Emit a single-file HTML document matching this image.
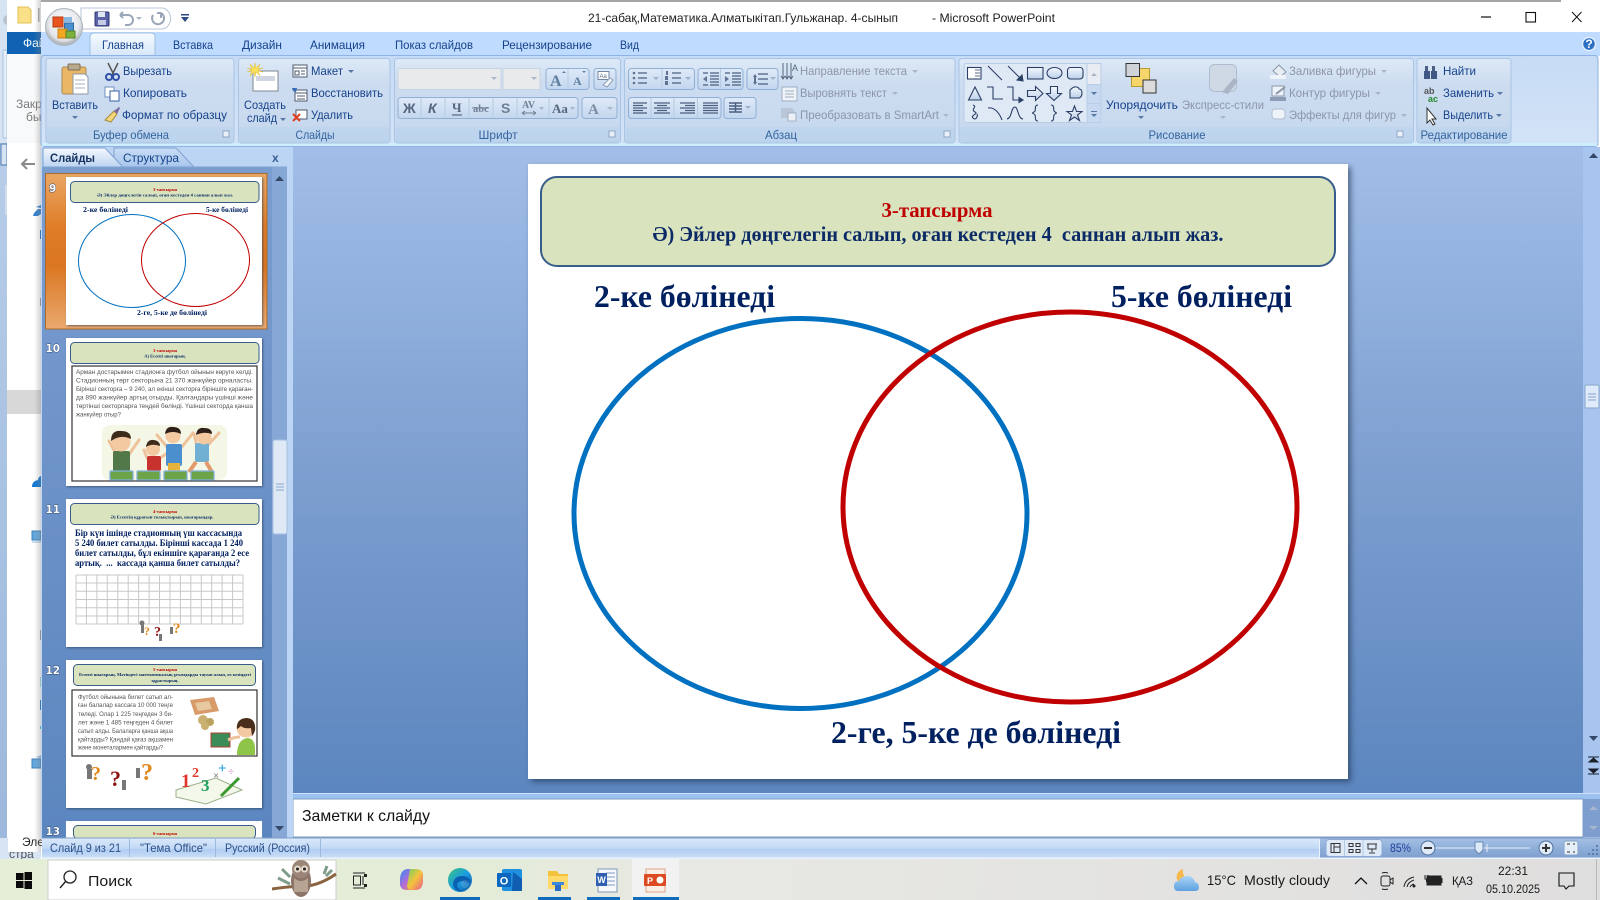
<!DOCTYPE html>
<html lang="ru">
<head>
<meta charset="utf-8">
<title>21-сабақ - Microsoft PowerPoint</title>
<style>
html,body{margin:0;padding:0;background:#fff;width:1600px;height:900px;overflow:hidden}
svg{display:block;position:absolute;left:0;top:0}
text{font-family:"Liberation Sans","Noto Sans CJK SC",sans-serif;font-size:12px;white-space:pre}
.t{fill:#15428b}
.d{fill:#8c96a8}
.g{fill:#33639f;text-anchor:middle}
.tab{fill:#15428b}
.s{font-family:"Liberation Serif","DejaVu Serif",serif;font-weight:bold}
.n{font-family:"DejaVu Sans",sans-serif;font-size:10.500px;font-weight:bold;fill:#fff;stroke:#2d4a75;stroke-width:.9;paint-order:stroke}
.m{text-anchor:middle}
.st{fill:#2a4f86}
.tb{fill:#1a1a1a}
.sh{fill:none;stroke:#2b3f66;stroke-width:1.100}
.ic{fill:none;stroke:#4a5f80;stroke-width:1.200}
</style>
</head>
<body>
<svg width="1600" height="900" viewBox="0 0 1600 900" xmlns="http://www.w3.org/2000/svg">
<defs>
<linearGradient id="main" x1="0" y1="0" x2="0" y2="1"><stop offset="0" stop-color="#a2bee8"/><stop offset=".5" stop-color="#7d9fd0"/><stop offset="1" stop-color="#5c86bf"/></linearGradient>
<linearGradient id="pane" x1="0" y1="0" x2="0" y2="1"><stop offset="0" stop-color="#7a9dd0"/><stop offset="1" stop-color="#5c86bf"/></linearGradient>
<linearGradient id="rib" x1="0" y1="0" x2="0" y2="1"><stop offset="0" stop-color="#c6dbf5"/><stop offset="1" stop-color="#d3e3f7"/></linearGradient>
<linearGradient id="grp" x1="0" y1="0" x2="0" y2="1"><stop offset="0" stop-color="#dde9f7"/><stop offset=".3" stop-color="#cddcf0"/><stop offset="1" stop-color="#c6d8ee"/></linearGradient>
<linearGradient id="lab" x1="0" y1="0" x2="0" y2="1"><stop offset="0" stop-color="#c0d6ee"/><stop offset="1" stop-color="#bcd3ed"/></linearGradient>
<linearGradient id="btn" x1="0" y1="0" x2="0" y2="1"><stop offset="0" stop-color="#dfeaf8"/><stop offset="1" stop-color="#c3d6ee"/></linearGradient>
<linearGradient id="atab" x1="0" y1="0" x2="0" y2="1"><stop offset="0" stop-color="#f6fbff"/><stop offset="1" stop-color="#d7e6f9"/></linearGradient>
<linearGradient id="sbar" x1="0" y1="0" x2="0" y2="1"><stop offset="0" stop-color="#dbe9fa"/><stop offset=".5" stop-color="#c2d9f6"/><stop offset=".55" stop-color="#afcdf2"/><stop offset="1" stop-color="#cfe1f8"/></linearGradient>
<linearGradient id="sbar2" x1="0" y1="0" x2="0" y2="1"><stop offset="0" stop-color="#a4c0e4"/><stop offset=".5" stop-color="#8fafda"/><stop offset="1" stop-color="#7f9fce"/></linearGradient>
<linearGradient id="task" x1="0" y1="0" x2="1" y2="0"><stop offset="0" stop-color="#e5efd8"/><stop offset=".3" stop-color="#e4ecd8"/><stop offset=".42" stop-color="#e8e8e4"/><stop offset="1" stop-color="#dfdede"/></linearGradient>
<linearGradient id="sel" x1="0" y1="0" x2="0" y2="1"><stop offset="0" stop-color="#eba765"/><stop offset=".35" stop-color="#df7c27"/><stop offset=".6" stop-color="#db7723"/><stop offset="1" stop-color="#eaa970"/></linearGradient>
<linearGradient id="ptab" x1="0" y1="0" x2="0" y2="1"><stop offset="0" stop-color="#f4f8fe"/><stop offset="1" stop-color="#bcd3f1"/></linearGradient>
<linearGradient id="ptab2" x1="0" y1="0" x2="0" y2="1"><stop offset="0" stop-color="#c8dcf6"/><stop offset="1" stop-color="#a8c6ec"/></linearGradient>
<linearGradient id="strip" x1="0" y1="0" x2="0" y2="1"><stop offset="0" stop-color="#b7cde8"/><stop offset="1" stop-color="#9db8dc"/></linearGradient>
<linearGradient id="wsh" x1="0" y1="0" x2="1" y2="0"><stop offset="0" stop-color="#999" stop-opacity="0"/><stop offset="1" stop-color="#777" stop-opacity=".35"/></linearGradient>
<linearGradient id="shp" x1="0" y1="0" x2="0" y2="1"><stop offset="0" stop-color="#f4f8fd"/><stop offset="1" stop-color="#bcd0ea"/></linearGradient>
<radialGradient id="orb" cx=".5" cy=".35" r=".7"><stop offset="0" stop-color="#ffffff"/><stop offset=".6" stop-color="#e3e5e8"/><stop offset="1" stop-color="#9da3aa"/></radialGradient>
<linearGradient id="edge" x1="0" y1="0" x2="1" y2="1"><stop offset="0" stop-color="#38c47a"/><stop offset=".5" stop-color="#1b9de2"/><stop offset="1" stop-color="#0c59a4"/></linearGradient>
<linearGradient id="cop" x1="0" y1="0" x2="1" y2="1"><stop offset="0" stop-color="#2a8ff0"/><stop offset=".5" stop-color="#b66ad8"/><stop offset="1" stop-color="#f2a13a"/></linearGradient>
<linearGradient id="cop2" x1="0" y1="0" x2="1" y2="1"><stop offset="0" stop-color="#6fd06a"/><stop offset=".5" stop-color="#f5c33c"/><stop offset="1" stop-color="#e85a8a"/></linearGradient>
<linearGradient id="cld" x1="0" y1="0" x2="0" y2="1"><stop offset="0" stop-color="#a9d4f7"/><stop offset="1" stop-color="#5fa0e0"/></linearGradient>
<filter id="ds" x="-5%" y="-5%" width="112%" height="112%"><feDropShadow dx="3" dy="3" stdDeviation="3" flood-color="#1e3350" flood-opacity=".6"/></filter>
<filter id="ds2" x="-5%" y="-5%" width="112%" height="112%"><feDropShadow dx="1" dy="1" stdDeviation="1" flood-color="#1e3350" flood-opacity=".6"/></filter>
</defs>

<!-- background window behind -->
<rect width="1600" height="900" fill="#fff"/>
<rect x="0" y="0" width="7" height="143" fill="#d6e3f2"/>
<rect x="3" y="50" width="4" height="88" rx="1" fill="#e6eef7" stroke="#a9c2e0"/>
<circle cx="8" cy="20" r="5" fill="#b9c3cf"/>
<rect x="7" y="0" width="34" height="143" fill="#f8f9fa"/>
<rect x="7" y="0" width="34" height="32" fill="#fff"/>
<path d="M18 7h10l3 3v13H18z" fill="#fbe08a" stroke="#e0c050"/>
<rect x="38" y="8" width="1.500" height="14" fill="#aaa"/>
<rect x="7" y="32" width="34" height="22" fill="#0f63b2"/>
<text x="23" y="47" fill="#fff" font-size="12">Фай</text>
<text x="16" y="108" fill="#7a7a7a" font-size="12">Закр</text>
<text x="26" y="121" fill="#7a7a7a" font-size="12">бы</text>
<rect x="0" y="143" width="7" height="695" fill="url(#strip)"/>
<rect x="5" y="185" width="2" height="30" fill="#d0dcec"/>
<rect x="1" y="144" width="6" height="21" fill="#d5e3f3" stroke="#4a78b0"/>
<rect x="7" y="143" width="34" height="695" fill="#fff"/>
<path d="M35 164H22m5-5-5 5 5 5" fill="none" stroke="#8a8a8a" stroke-width="2"/>
<path d="M34 213l4-4h3v5l-3 2h-5zM36 207l5-2v3z" fill="#2f7fd0"/>
<rect x="40" y="230" width="1" height="9" fill="#1f78c8"/>
<rect x="40" y="298" width="1" height="8" fill="#999"/>
<rect x="7" y="390" width="34" height="24" fill="#d8d8d8"/>
<path d="M32 487q0-6 6-7 0-3 3-4v11z" fill="#0f78d4"/>
<rect x="32" y="531" width="9" height="9" fill="#62a8de" stroke="#3f7fb8"/><path d="M32 542h9" stroke="#8fbadf"/>
<rect x="40" y="630" width="1" height="10" fill="#999"/>
<rect x="40" y="677" width="1" height="10" fill="#a8dcdc"/>
<rect x="40" y="700" width="1" height="10" fill="#1f78c8"/>
<rect x="40" y="726" width="1" height="3" fill="#44b8d8"/>
<rect x="32" y="759" width="9" height="9" fill="#62a8de" stroke="#3f7fb8"/><path d="M36 757l5-2v4z" fill="#9fc6e8"/>
<rect x="0" y="838" width="41" height="21" fill="#d6e4f4"/>
<text x="9" y="858" fill="#555" font-size="12">стра</text>
<rect x="8" y="838" width="33" height="14" fill="#fff"/>
<text x="22" y="846" fill="#222" font-size="12">Эле</text>
<rect x="34" y="0" width="7" height="852" fill="url(#wsh)"/>

<!-- title bar -->
<rect x="41" y="2" width="1559" height="30" fill="#fff"/>
<rect x="41" y="0" width="1520" height="2" fill="#a6a6a6"/>
<text x="588" y="22" fill="#222" textLength="310" lengthAdjust="spacingAndGlyphs">21-сабақ,Математика.Алматыкітап.Гульжанар. 4-сынып</text>
<text x="932" y="22" fill="#222" textLength="123" lengthAdjust="spacingAndGlyphs">- Microsoft PowerPoint</text>
<path d="M1481 17h10" stroke="#111" stroke-width="1.200"/>
<rect x="1526" y="12.500" width="9.500" height="9.500" fill="none" stroke="#111" stroke-width="1.100"/>
<path d="M1572 12l9.500 10m0-10-9.500 10" stroke="#111" stroke-width="1"/>

<!-- QAT -->
<path d="M81 8h82a11 11 0 0 1 0 21H81z" fill="#fff" stroke="#b7c6d8"/>
<rect x="95" y="12" width="14" height="14" rx="1" fill="#5a63a8" stroke="#2f3672"/>
<rect x="98" y="12" width="7" height="5" fill="#dfe6f4"/><rect x="98" y="20" width="8" height="5" fill="#c5cbe6"/>
<path d="M120 15h8a5 5 0 0 1 0 10h-3M120 15l3-3M120 15l3 3" fill="none" stroke="#9aa7b8" stroke-width="2"/>
<path d="M136 17l3 3 3-3z" fill="#aab6c6"/>
<path d="M161 13a6 6 0 1 1-8 2m8-2v5m0-5h-4" fill="none" stroke="#9aa7b8" stroke-width="2"/>
<path d="M181 17h8l-4 5z M181 14h8v1.500h-8z" fill="#2b4a80"/>

<!-- tabs -->
<rect x="41" y="32" width="1559" height="24" fill="#bfdbff"/>
<path d="M90 56V37q0-4 4-4h57q4 0 4 4v19z" fill="url(#atab)" stroke="#9ebfdf"/>
<text class="tab" x="102" y="49" textLength="42" lengthAdjust="spacingAndGlyphs">Главная</text>
<text class="tab" x="173" y="49" textLength="40" lengthAdjust="spacingAndGlyphs">Вставка</text>
<text class="tab" x="242" y="49" textLength="40" lengthAdjust="spacingAndGlyphs">Дизайн</text>
<text class="tab" x="310" y="49" textLength="55" lengthAdjust="spacingAndGlyphs">Анимация</text>
<text class="tab" x="395" y="49" textLength="78" lengthAdjust="spacingAndGlyphs">Показ слайдов</text>
<text class="tab" x="502" y="49" textLength="90" lengthAdjust="spacingAndGlyphs">Рецензирование</text>
<text class="tab" x="620" y="49" textLength="19" lengthAdjust="spacingAndGlyphs">Вид</text>

<!-- ribbon -->
<rect x="41" y="55.500" width="1557" height="91" rx="3" fill="url(#rib)" stroke="#8db2e3"/>
<rect x="42" y="143" width="1555" height="3" fill="#cfeefd"/>
<circle cx="1589" cy="44" r="6.500" fill="#2d6fc4" stroke="#e3effb" stroke-width="1.500"/>
<text x="1589" y="48" fill="#fff" font-size="11" font-weight="bold" class="m">?</text>

<!-- groups -->
<g stroke="#a9c4e4">
<rect x="46" y="58.500" width="188" height="84.500" rx="3" fill="url(#grp)"/>
<rect x="238.500" y="58.500" width="151.500" height="84.500" rx="3" fill="url(#grp)"/>
<rect x="394.500" y="58.500" width="226" height="84.500" rx="3" fill="url(#grp)"/>
<rect x="624.500" y="58.500" width="330.500" height="84.500" rx="3" fill="url(#grp)"/>
<rect x="959" y="58.500" width="454.500" height="84.500" rx="3" fill="url(#grp)"/>
<rect x="1417" y="58.500" width="94" height="84.500" rx="3" fill="url(#grp)"/>
</g>
<g fill="url(#lab)">
<rect x="47" y="126.500" width="186" height="16"/><rect x="239.500" y="126.500" width="150" height="16"/><rect x="395.500" y="126.500" width="224.500" height="16"/><rect x="625.500" y="126.500" width="329" height="16"/><rect x="960" y="126.500" width="453" height="16"/><rect x="1418" y="126.500" width="92.500" height="16"/>
</g>
<text class="g" x="131" y="139" textLength="76" lengthAdjust="spacingAndGlyphs">Буфер обмена</text>
<text class="g" x="315" y="139" textLength="39" lengthAdjust="spacingAndGlyphs">Слайды</text>
<text class="g" x="498" y="139" textLength="39" lengthAdjust="spacingAndGlyphs">Шрифт</text>
<text class="g" x="781" y="139" textLength="32" lengthAdjust="spacingAndGlyphs">Абзац</text>
<text class="g" x="1177" y="139" textLength="57" lengthAdjust="spacingAndGlyphs">Рисование</text>
<text class="g" x="1464" y="139" textLength="87" lengthAdjust="spacingAndGlyphs">Редактирование</text>
<g fill="#eaf0f8" stroke="#8fa6c4"><rect x="223" y="131" width="6" height="6"/><rect x="609" y="131" width="6" height="6"/><rect x="944" y="131" width="6" height="6"/><rect x="1397" y="131" width="6" height="6"/></g>

<!-- clipboard -->
<rect x="62" y="67" width="24" height="27" rx="2" fill="#e9b765" stroke="#a98a55"/>
<rect x="68" y="64" width="12" height="6" rx="1" fill="#b8a98a" stroke="#7e7058"/>
<path d="M73 74h12l3 3v17H73z" fill="#fff" stroke="#8e9aa8"/>
<path d="M75 80h10M75 84h10M75 88h10" stroke="#aab2be"/>
<text class="t" x="52" y="109" textLength="46" lengthAdjust="spacingAndGlyphs">Вставить</text>
<path d="M72 116h6l-3 3z" fill="#5878a4"/>
<path d="M108 63l6 12M118 63l-6 12" stroke="#555" stroke-width="1.500"/><circle cx="109" cy="77" r="3" fill="none" stroke="#2e50a8" stroke-width="2"/><circle cx="116" cy="77" r="3" fill="none" stroke="#2e50a8" stroke-width="2"/>
<text class="t" x="123" y="75" textLength="49" lengthAdjust="spacingAndGlyphs">Вырезать</text>
<rect x="105" y="87" width="9" height="10" fill="#fff" stroke="#6f8fc0"/><rect x="110" y="91" width="9" height="10" fill="#fff" stroke="#3a5fa8"/>
<text class="t" x="123" y="97" textLength="64" lengthAdjust="spacingAndGlyphs">Копировать</text>
<path d="M105 120l9-9 3 3-6 8z" fill="#f3d67a" stroke="#a78c3c"/><path d="M114 111l5-4 1 1-3 6z" fill="#7a6a9e"/>
<text class="t" x="122" y="119" textLength="105" lengthAdjust="spacingAndGlyphs">Формат по образцу</text>

<!-- slides group -->
<rect x="253" y="71" width="25" height="20" fill="#fff" stroke="#7f8792"/><rect x="256" y="76" width="19" height="5" fill="#cfd6e2"/>
<path d="M255 63l1 5 4-4-2 5 5-1-5 2 5 2-5-1 2 5-4-4-1 5-1-5-4 4 2-5-5 1 5-2-5-2 5 1-2-5 4 4z" fill="#f7e15a" stroke="#e5b93b" stroke-width=".5"/>
<text class="t" x="244" y="109" textLength="42" lengthAdjust="spacingAndGlyphs">Создать</text>
<text class="t" x="247" y="122" textLength="30" lengthAdjust="spacingAndGlyphs">слайд</text>
<path d="M280 118h6l-3 3z" fill="#5878a4"/>
<rect x="293" y="65" width="14" height="12" fill="#fff" stroke="#4e5b6d"/><path d="M293 68h14M295 71h4v4h-4zM301 71h4M301 74h4" stroke="#4e5b6d" fill="none"/>
<text class="t" x="311" y="75" textLength="32" lengthAdjust="spacingAndGlyphs">Макет</text>
<path d="M348 70h6l-3 3z" fill="#5878a4"/>
<rect x="295" y="90" width="12" height="11" fill="#fff" stroke="#4e5b6d"/><path d="M295 93h12M297 96h8M297 99h8" stroke="#4e5b6d"/><path d="M292 88h5l-1 4-3-1z" fill="#3a6cb8"/>
<text class="t" x="311" y="97" textLength="72" lengthAdjust="spacingAndGlyphs">Восстановить</text>
<rect x="296" y="110" width="11" height="9" fill="#fff" stroke="#4e5b6d"/><path d="M293 114l7 7m0-7-7 7" stroke="#e04020" stroke-width="2"/>
<text class="t" x="311" y="119" textLength="42" lengthAdjust="spacingAndGlyphs">Удалить</text>

<!-- font group -->
<rect x="398" y="68.500" width="103" height="21" fill="#e8eaec" stroke="#c6d4e5"/><path d="M491 77h6l-3 3z" fill="#aab6c6"/>
<rect x="503" y="68.500" width="37" height="21" fill="#e8eaec" stroke="#c6d4e5"/><path d="M531 77h6l-3 3z" fill="#aab6c6"/>
<rect x="546" y="68.500" width="43" height="21" rx="3" fill="url(#btn)" stroke="#8fb0d7"/><path d="M568 69v20" stroke="#b4cbe4"/>
<text x="550" y="86" class="s" fill="#5f7f9f" style="font-size:16px">A</text><path d="M562 73l2-2 2 2z" fill="#5f7f9f"/>
<text x="573" y="85" class="s" fill="#5f7f9f" style="font-size:12px">A</text><path d="M582 71h4l-2 2z" fill="#5f7f9f"/>
<rect x="594" y="68.500" width="22" height="21" rx="3" fill="url(#btn)" stroke="#8fb0d7"/><rect x="598" y="71.500" width="11" height="8" fill="#fff" stroke="#6f87a6"/><text x="599.500" y="78" fill="#5a7090" style="font-size:6px">Aa</text><path d="M603 85l7-7 3 2-6 7z" fill="#f3f6fa" stroke="#8fa0b8"/>
<rect x="398" y="97.500" width="180" height="21" rx="3" fill="url(#btn)" stroke="#8fb0d7"/>
<path d="M421 98v20M445 98v20M469 98v20M493 98v20M517 98v20M549 98v20" stroke="#b4cbe4"/>
<text x="403" y="113" fill="#55667e" style="font-size:14px;font-weight:bold">Ж</text>
<text x="428" y="113" fill="#55667e" style="font-size:14px;font-weight:bold;font-style:italic">К</text>
<text x="452" y="112" class="s" fill="#55667e" style="font-size:13px">Ч</text><path d="M452 115h10" stroke="#55667e" stroke-width="1.200"/>
<text x="473" y="112" class="s" fill="#6f7f94" style="font-size:10.500px">abc</text><path d="M472 108h17" stroke="#6f7f94"/>
<text x="501" y="113" fill="#6f7f94" style="font-size:14px;font-weight:bold">S</text>
<text x="522" y="108" class="s" fill="#6f7f94" style="font-size:10px">AV</text><path d="M522 113h14M522 113l3-2M522 113l3 2M536 113l-3-2M536 113l-3 2" stroke="#6f7f94" fill="none"/><path d="M539 107h5l-2.500 3z" fill="#aab6c6"/>
<text x="552" y="113" class="s" fill="#55667e" style="font-size:13px">Aa</text><path d="M570 107h5l-2.500 3z" fill="#aab6c6"/>
<rect x="582" y="97.500" width="35" height="21" rx="3" fill="url(#btn)" stroke="#8fb0d7"/><text x="588" y="114" class="s" fill="#7c8da3" style="font-size:15px">A</text><path d="M607 107h6l-3 3z" fill="#aab6c6"/>

<!-- paragraph -->
<g fill="url(#btn)" stroke="#8fb0d7">
<rect x="628.500" y="68.500" width="66" height="21" rx="3"/><rect x="698" y="68.500" width="45" height="21" rx="3"/><rect x="747" y="68.500" width="31" height="21" rx="3"/>
<rect x="628.500" y="97.500" width="92.500" height="21" rx="3"/><rect x="724" y="97.500" width="32" height="21" rx="3"/>
</g>
<path d="M662 69v20M720.500 69v20M651 98v20M674 98v20M697.500 98v20" stroke="#b4cbe4"/>
<g class="ic">
<path d="M638 73h9M638 78h9M638 83h9M672 73h9M672 78h9M672 83h9"/>
<path d="M710 73h9M710 76h9M710 79h9M710 82h9M710 85h9M703 73h5M703 85h5"/>
<path d="M732 73h9M732 76h9M732 79h9M732 82h9M732 85h9M725 73h5M725 85h5"/>
<path d="M758 74h10M758 79h10M758 84h10"/>
<path d="M633 103h14M633 105.500h10M633 108h14M633 110.500h10M633 113h14M654 103h16M657 105.500h10M654 108h16M657 110.500h10M654 113h16M680 103h15M685 105.500h10M680 108h15M685 110.500h10M680 113h15M703 103h15M703 105.500h15M703 108h15M703 110.500h15M703 113h15"/>
<path d="M729 103h13M729 106h13M729 109h13M729 112h13M735.500 103v9" stroke-width="1.500"/>
</g>
<g fill="#5f7290"><circle cx="634" cy="73" r="1.300"/><circle cx="634" cy="78" r="1.300"/><circle cx="634" cy="83" r="1.300"/>
<path d="M666 71h2v4h-2zM665 76h3v4h-3zM665 81h3v4h-3z"/><path d="M703 79l4-3v6zM729 79l-4-3v6zM755 74l2 3h-4zM755 85l2-3h-4zM754 77h2v5h-2z"/></g>
<g fill="#9fb1c8"><path d="M653 77h6l-3 3zM685 77h6l-3 3zM770 77h6l-3 3zM745 106h6l-3 3z"/></g>
<path d="M783 63v15M787 63v15M791 63v15M781 76l2 3 2-3M785 76l2 3 2-3M789 76l2 3 2-3" stroke="#55667e" fill="none"/><text x="792" y="71" fill="#55667e" style="font-size:9px">A</text>
<text class="d" x="800" y="75" textLength="107" lengthAdjust="spacingAndGlyphs">Направление текста</text><path d="M912 70h6l-3 3z" fill="#aab6c6"/>
<rect x="782" y="87" width="15" height="14" fill="#f0f3f7" stroke="#9eafc5"/><path d="M785 91h9M785 94h9M785 97h9" stroke="#9eafc5"/>
<text class="d" x="800" y="97" textLength="87" lengthAdjust="spacingAndGlyphs">Выровнять текст</text><path d="M892 92h6l-3 3z" fill="#aab6c6"/>
<path d="M781 108h11l4 5-4 5h-11z" fill="#b8c6d8"/><rect x="788" y="113" width="8" height="8" fill="#edf1f6" stroke="#a0b0c4"/>
<text class="d" x="800" y="119" textLength="139" lengthAdjust="spacingAndGlyphs">Преобразовать в SmartArt</text><path d="M943 114h6l-3 3z" fill="#aab6c6"/>

<!-- drawing gallery -->
<rect x="964" y="63.500" width="137" height="59" rx="2" fill="#dfe9f6" stroke="#b8cde6"/>
<rect x="1087" y="63.500" width="14" height="21" fill="#e9edf3" stroke="#b8cde6"/><rect x="1087" y="84.500" width="14" height="19" fill="#c6d9f1" stroke="#b8cde6"/><rect x="1087" y="103.500" width="14" height="19" fill="#c6d9f1" stroke="#b8cde6"/>
<path d="M1091 76h6l-3-3z" fill="#a7b4c4"/><path d="M1091 92h6l-3 3zM1091 111h6v1h-6zM1091 114h6l-3 3z" fill="#5878a4"/>
<g class="sh">
<rect x="967.500" y="67.500" width="13.500" height="11.500" fill="#fff"/><path d="M975 70h5M975 73h5M975 76h5" stroke-width=".7"/>
<path d="M988 66l14 14M1008 66l14 14"/><path d="M1023 81l-6-1 5-5z" fill="#2b3f66"/>
<rect x="1027.500" y="67.500" width="15.500" height="11.500" fill="url(#shp)"/><ellipse cx="1054.500" cy="73" rx="7.500" ry="5.500" fill="url(#shp)"/><rect x="1067.500" y="67.500" width="15.500" height="11.500" rx="3" fill="url(#shp)"/>
<path d="M975 87l6.500 13h-13z" fill="url(#shp)"/><path d="M987 87h6v12h10M1007 87h6v13h8"/><path d="M1023 100l-4-2.500v5z" fill="#2b3f66"/>
<path d="M1027.500 90.500h8v-4l7.500 7-7.500 7v-4h-8z" fill="url(#shp)"/><path d="M1050.500 86.500h7v7h4l-7.500 7-7.500-7h4z" fill="url(#shp)"/><path d="M1070 90q4-4 6-3 3 0 3 2 3 0 3 4t-3 5h-9z" fill="url(#shp)"/>
<path d="M973 105c5 2-3 4 2 7 4 2-5 3-2 6 3 3 5-2 4-4"/><path d="M988 108c6-1 11 4 14 12M1007 119c5-1 4-12 8-12 3 0 3 12 8 12"/>
<path d="M1038 105c-4 0-2 5-3 6-1 1-2 2-3 2 1 0 2 1 3 2 1 1-1 6 3 6M1051 105c4 0 2 5 3 6 1 1 2 2 3 2-1 0-2 1-3 2-1 1 1 6-3 6"/>
<path d="M1074.500 106l2 5.500h5.500l-4.500 3.500 2 5.500-5-3.500-5 3.500 2-5.500-4.500-3.500h5.500z" fill="url(#shp)"/>
</g>
<rect x="1131.500" y="68.500" width="18" height="18" fill="#f6d66b" stroke="#b99b36"/>
<rect x="1126" y="63.500" width="13.500" height="13" fill="#cfd3d8" stroke="#333"/><rect x="1143" y="80" width="13" height="13" fill="#dcdcdc" stroke="#333"/>
<text class="t" x="1106" y="109" textLength="72" lengthAdjust="spacingAndGlyphs">Упорядочить</text><path d="M1138 116h6l-3 3z" fill="#5878a4"/>
<rect x="1209.500" y="64.500" width="27" height="27" rx="5" fill="#cfd9e6" stroke="#aebdd0"/><path d="M1222 92l12-14 4 3-10 13z" fill="#aab6c6"/>
<text class="d" x="1182" y="109" textLength="82" lengthAdjust="spacingAndGlyphs">Экспресс-стили</text><path d="M1220 116h6l-3 3z" fill="#aab6c6"/>
<path d="M1273 71l6-6 7 7-6 5z" fill="#e8edf4" stroke="#8a97a8"/><rect x="1270" y="75" width="16" height="4" fill="#eef3f9"/>
<text class="d" x="1289" y="75" textLength="87" lengthAdjust="spacingAndGlyphs">Заливка фигуры</text><path d="M1381 70h6l-3 3z" fill="#aab6c6"/>
<path d="M1272 86h12v10h-12z" fill="#eef3f9" stroke="#8a97a8"/><path d="M1276 94l9-7" stroke="#8a97a8" stroke-width="2"/><rect x="1270" y="97" width="16" height="4" fill="#8e9db5"/>
<text class="d" x="1289" y="97" textLength="81" lengthAdjust="spacingAndGlyphs">Контур фигуры</text><path d="M1375 92h6l-3 3z" fill="#aab6c6"/>
<rect x="1272" y="109" width="13" height="10" rx="3" fill="#eef3f9" stroke="#aebdd0"/>
<text class="d" x="1289" y="119" textLength="107" lengthAdjust="spacingAndGlyphs">Эффекты для фигур</text><path d="M1401 114h6l-3 3z" fill="#aab6c6"/>

<!-- editing -->
<path d="M1425 66h3v5h-3zM1432 66h3v5h-3z" fill="#4c5f82"/><rect x="1424" y="71" width="6" height="8" fill="#3f5884"/><rect x="1431" y="71" width="6" height="8" fill="#3f5884"/>
<text class="t" x="1443" y="75" textLength="33" lengthAdjust="spacingAndGlyphs">Найти</text>
<text x="1424" y="94" fill="#555" style="font-size:9px;font-weight:bold">ab</text><text x="1428" y="102" fill="#238a2e" style="font-size:9px;font-weight:bold">ac</text>
<text class="t" x="1443" y="97" textLength="51" lengthAdjust="spacingAndGlyphs">Заменить</text><path d="M1497 92h6l-3 3z" fill="#5878a4"/>
<path d="M1427 108v15l3-3 3 5 2-1-3-5h4z" fill="#fff" stroke="#333"/>
<text class="t" x="1443" y="119" textLength="50" lengthAdjust="spacingAndGlyphs">Выделить</text><path d="M1496 114h6l-3 3z" fill="#5878a4"/>

<!-- main workspace -->
<rect x="41" y="147" width="1559" height="692" fill="#bfd7f6"/>
<rect x="293" y="147" width="1290" height="646" fill="url(#main)"/>
<!-- notes -->
<rect x="293" y="793" width="1307" height="6" fill="#9cc2f0"/><rect x="293" y="793" width="1307" height="1" fill="#cfe2fa"/>
<rect x="293" y="799" width="1290" height="38" fill="#fff" stroke="#7e9bc4"/>
<text x="302" y="821" fill="#111" textLength="128" lengthAdjust="spacingAndGlyphs" style="font-size:16px">Заметки к слайду</text>

<!-- main scrollbar -->
<rect x="1583" y="147" width="17" height="646" fill="#a7c5ee"/>
<rect x="1583" y="799" width="17" height="38" fill="#7f9ed0"/>
<path d="M1589 158l4.500-5 4.500 5z" fill="#34496a"/>
<rect x="1585" y="385" width="14" height="23" rx="1" fill="#dfeafa" stroke="#8aa7ce"/><path d="M1588 394h8M1588 397h8M1588 400h8" stroke="#8aa7ce"/>
<path d="M1589 736h9l-4.500 5z" fill="#34496a"/>
<path d="M1588 757h11M1589 762l4.500-4 4.500 4zM1589 769l4.500 4 4.500-4zM1588 774h11" fill="#1a1f29" stroke="#1a1f29"/>
<path d="M1589 810l4.500-4 4.500 4z M1589 826h9l-4.500 4z" fill="#a6b6cd"/>

<!-- slide -->
<g>
<rect x="528" y="164" width="820" height="615" fill="#fff" filter="url(#ds)"/>
<rect x="541" y="177" width="794" height="89" rx="16" fill="#d9e4bf" stroke="#385d8a" stroke-width="2"/>
<text class="s m" x="937" y="217" fill="#c00000" style="font-size:21px" textLength="111" lengthAdjust="spacingAndGlyphs">3-тапсырма</text>
<text class="s m" x="938" y="241" fill="#0b2a66" style="font-size:21px" textLength="571" lengthAdjust="spacingAndGlyphs">Ә) Эйлер дөңгелегін салып, оған кестеден 4  саннан алып жаз.</text>
<text class="s" x="594" y="307" fill="#002060" style="font-size:32px" textLength="181" lengthAdjust="spacingAndGlyphs">2-ке бөлінеді</text>
<text class="s" x="1111" y="307" fill="#002060" style="font-size:32px" textLength="181" lengthAdjust="spacingAndGlyphs">5-ке бөлінеді</text>
<text class="s" x="831" y="743" fill="#002060" style="font-size:32px" textLength="290" lengthAdjust="spacingAndGlyphs">2-ге, 5-ке де бөлінеді</text>
<ellipse cx="800.500" cy="513.500" rx="226.500" ry="195" fill="none" stroke="#0070c0" stroke-width="5"/>
<ellipse cx="1070" cy="507" rx="227" ry="195" fill="none" stroke="#c00000" stroke-width="5"/>
</g>

<!-- side pane -->
<rect x="42" y="167" width="230" height="671" fill="url(#pane)"/>
<rect x="41" y="147" width="252" height="20" fill="#bcd5f4"/>
<path d="M194 167l-17-18q-1-1-3-1h-60v19z" fill="url(#ptab2)" stroke="#7fa2d1"/>
<path d="M43 167v-17q0-2 2-2h60l18 19z" fill="url(#ptab)" stroke="#7fa2d1"/>
<text x="50" y="162" fill="#15325f" font-weight="bold" textLength="45" lengthAdjust="spacingAndGlyphs">Слайды</text>
<text x="123" y="162" fill="#15428b" textLength="56" lengthAdjust="spacingAndGlyphs">Структура</text>
<text x="272" y="162" fill="#3a5f95" font-weight="bold" style="font-size:12px">x</text>
<rect x="42" y="166.500" width="245" height="1" fill="#7fa2d1"/>
<!-- pane scrollbar -->
<rect x="272" y="167" width="15" height="671" fill="#87a8d6"/>
<rect x="287" y="147" width="6" height="691" fill="#bcd5f4"/>
<path d="M275 181l4.500-5 4.500 5z" fill="#34496a"/>
<rect x="273" y="440" width="14" height="94" rx="2" fill="#dfe9f6" stroke="#a9c1e0"/><path d="M276 484h8M276 487h8M276 490h8" stroke="#8aa7ce"/>
<path d="M275 826h9l-4.500 5z" fill="#34496a"/>

<!-- thumb 9 -->
<rect x="45.500" y="173.500" width="221.500" height="155.500" fill="url(#sel)" stroke="#a86b2e"/>
<text class="n" x="49" y="192">9</text>
<rect x="66" y="177" width="196" height="148" fill="#fff" filter="url(#ds2)"/>
<rect x="70.500" y="181.500" width="188.500" height="21" rx="4" fill="#d9e4bf" stroke="#385d8a"/>
<text class="s m" x="165" y="191" fill="#c00000" style="font-size:4.500px">3-тапсырма</text>
<text class="s m" x="165" y="196.500" fill="#0b2a66" style="font-size:4.500px" textLength="136" lengthAdjust="spacingAndGlyphs">Ә) Эйлер дөңгелегін салып, оған кестеден 4 саннан алып жаз.</text>
<text class="s" x="83" y="212" fill="#002060" style="font-size:7.500px" textLength="45" lengthAdjust="spacingAndGlyphs">2-ке бөлінеді</text>
<text class="s" x="206" y="212" fill="#002060" style="font-size:7.500px" textLength="42" lengthAdjust="spacingAndGlyphs">5-ке бөлінеді</text>
<text class="s" x="137" y="315" fill="#002060" style="font-size:7.500px" textLength="70" lengthAdjust="spacingAndGlyphs">2-ге, 5-ке де бөлінеді</text>
<ellipse cx="132" cy="261" rx="53.500" ry="46.500" fill="none" stroke="#0070c0"/>
<ellipse cx="195.500" cy="260" rx="54" ry="46.500" fill="none" stroke="#c00000"/>

<!-- thumb 10 -->
<text class="n" x="45.500" y="352">10</text>
<rect x="66" y="338" width="196" height="148" fill="#fff" filter="url(#ds2)"/>
<rect x="70.500" y="342.500" width="188.500" height="21" rx="4" fill="#d9e4bf" stroke="#385d8a"/>
<text class="s m" x="165" y="352" fill="#c00000" style="font-size:4.500px">3-тапсырма</text>
<text class="s m" x="165" y="357.500" fill="#0b2a66" style="font-size:4.500px">А) Есепті шығарың.</text>
<rect x="72" y="366" width="185" height="115" fill="#fff" stroke="#333" stroke-width="1.200"/>
<g>
<text x="76" y="374" fill="#555" style="font-size:6px" textLength="177" lengthAdjust="spacingAndGlyphs">Арман достарымен стадионға футбол ойынын көруге келді.</text>
<text x="76" y="382.500" fill="#555" style="font-size:6px" textLength="177" lengthAdjust="spacingAndGlyphs">Стадионның төрт секторына 21 370 жанкүйер орналасты.</text>
<text x="76" y="391" fill="#555" style="font-size:6px" textLength="177" lengthAdjust="spacingAndGlyphs">Бірінші секторға – 9 240, ал екінші секторға біріншіге қараған-</text>
<text x="76" y="399.500" fill="#555" style="font-size:6px" textLength="177" lengthAdjust="spacingAndGlyphs">да 890 жанкүйер артық отырды. Қалғандары үшінші және</text>
<text x="76" y="408" fill="#555" style="font-size:6px" textLength="177" lengthAdjust="spacingAndGlyphs">төртінші секторларға теңдей бөлінді. Үшінші секторда қанша</text>
<text x="76" y="416.500" fill="#555" style="font-size:6px">жанкүйер отыр?</text>
</g>
<rect x="102" y="425" width="125" height="55" rx="8" fill="#f4f6e6"/>
<g stroke="#eec29a" stroke-width="3" fill="none" stroke-linecap="round"><path d="M116 454l-7-13M128 456l11-16M147 458l-3-8M160 458l6-4M168 448l-11-13M181 448l12-15M197 446l-3-12M209 444l10-11"/></g>
<rect x="113" y="451" width="17" height="21" rx="2" fill="#52784a"/><circle cx="121" cy="442" r="9.500" fill="#f3c9a2"/><path d="M111 441q0-11 10-10 10 0 10 8-10-5-20 2z" fill="#3d2b1c"/>
<rect x="147" y="456" width="14" height="15" rx="2" fill="#c8322e"/><circle cx="153" cy="449" r="7" fill="#f3c9a2"/><path d="M146 447q1-8 8-7 6 1 6 6-8-3-14 1z" fill="#3d2b1c"/>
<rect x="166" y="444" width="16" height="22" rx="2" fill="#4c8fcf"/><rect x="168" y="463" width="12" height="9" fill="#e6b43c"/><circle cx="173" cy="436" r="7.500" fill="#f3c9a2"/><path d="M165 434q1-8 8-7 8 0 8 7-8-4-16 0z" fill="#2e2018"/>
<rect x="195" y="443" width="14" height="19" rx="2" fill="#71b0d2"/><path d="M196 462l-7 10M206 462l6 10" stroke="#e39a6b" stroke-width="4"/><circle cx="204" cy="437" r="7.500" fill="#f3c9a2"/><path d="M196 435q1-8 8-7 8 0 8 6-8-3-16 1z" fill="#2e2018"/>
<g fill="#6da447" stroke="#82b0df" stroke-width="1.200"><rect x="110" y="471" width="23" height="9" rx="1"/><rect x="137" y="471" width="23" height="9" rx="1"/><rect x="164" y="471" width="23" height="9" rx="1"/><rect x="191" y="471" width="23" height="9" rx="1"/></g>

<!-- thumb 11 -->
<text class="n" x="45.500" y="513">11</text>
<rect x="66" y="499" width="196" height="148" fill="#fff" filter="url(#ds2)"/>
<rect x="70.500" y="503.500" width="188.500" height="21" rx="4" fill="#d9e4bf" stroke="#385d8a"/>
<text class="s m" x="165" y="513" fill="#c00000" style="font-size:4.500px">4-тапсырма</text>
<text class="s m" x="162" y="518.500" fill="#0b2a66" style="font-size:4.500px" textLength="103" lengthAdjust="spacingAndGlyphs">Ә) Есептің құрағын толықтырып, шығарыңдар.</text>
<text class="s" x="75" y="536" style="font-size:9.500px" fill="#002060" textLength="167" lengthAdjust="spacingAndGlyphs">Бір күн ішінде стадионның үш кассасында</text>
<text class="s" x="75" y="546" style="font-size:9.500px" fill="#002060" textLength="168" lengthAdjust="spacingAndGlyphs">5 240 билет сатылды. Бірінші кассада 1 240</text>
<text class="s" x="75" y="556" style="font-size:9.500px" fill="#002060" textLength="174" lengthAdjust="spacingAndGlyphs">билет сатылды, бұл екіншіге қарағанда 2 есе</text>
<text class="s" x="75" y="566" style="font-size:9.500px" fill="#002060" textLength="165" lengthAdjust="spacingAndGlyphs">артық.  ...  кассада қанша билет сатылды?</text>
<path d="M76 575h167M76 583h167M76 591.300h167M76 599.500h167M76 607.700h167M76 616h167M76 624h167M76 575v49M86.400 575v49M96.900 575v49M107.300 575v49M117.800 575v49M128.200 575v49M138.600 575v49M149.100 575v49M159.500 575v49M170 575v49M180.400 575v49M190.800 575v49M201.300 575v49M211.700 575v49M222.100 575v49M232.600 575v49M243 575v49" stroke="#c8c8c8" fill="none"/>
<rect x="140" y="624.500" width="45" height="14" fill="#fff" opacity=".7"/>
<circle cx="142" cy="623" r="2.500" fill="#777"/><rect x="141" y="625" width="3" height="8" fill="#777"/>
<text class="s" x="144" y="635" fill="#e08a1e" style="font-size:12px">?</text>
<text class="s" x="154" y="636" fill="#8e1414" style="font-size:14px">?</text><rect x="159" y="634" width="3" height="7" fill="#777"/>
<rect x="170" y="627" width="3" height="7" fill="#777"/><text class="s" x="173" y="633" fill="#e08a1e" style="font-size:15px">?</text>

<!-- thumb 12 -->
<text class="n" x="45.500" y="674">12</text>
<rect x="66" y="660" width="196" height="148" fill="#fff" filter="url(#ds2)"/>
<rect x="73.500" y="664.500" width="182" height="21" rx="4" fill="#d9e4bf" stroke="#385d8a"/>
<text class="s m" x="165" y="671" fill="#c00000" style="font-size:4.500px">5-тапсырма</text>
<text class="s m" x="165" y="676" fill="#0b2a66" style="font-size:4.500px" textLength="172" lengthAdjust="spacingAndGlyphs">Есепті шығарың. Мәтіндегі математикалық ұғымдарды тауып алып, өз кезіңдегі</text>
<text class="s m" x="165" y="682" fill="#0b2a66" style="font-size:4.500px">құрастырың.</text>
<rect x="72" y="690" width="185" height="66" fill="#fff" stroke="#333" stroke-width="1.200"/>
<g>
<text x="78" y="699" fill="#555" style="font-size:6px" textLength="95" lengthAdjust="spacingAndGlyphs">Футбол ойынына билет сатып ал-</text>
<text x="78" y="707" fill="#555" style="font-size:6px" textLength="95" lengthAdjust="spacingAndGlyphs">ған балалар кассаға 10 000 теңге</text>
<text x="78" y="716" fill="#555" style="font-size:6px" textLength="95" lengthAdjust="spacingAndGlyphs">төледі. Олар 1 225 теңгеден 3 би-</text>
<text x="78" y="724.500" fill="#555" style="font-size:6px" textLength="95" lengthAdjust="spacingAndGlyphs">лет және 1 485 теңгеден 4 билет</text>
<text x="78" y="733" fill="#555" style="font-size:6px" textLength="95" lengthAdjust="spacingAndGlyphs">сатып алды. Балаларға қанша ақша</text>
<text x="78" y="741.500" fill="#555" style="font-size:6px" textLength="95" lengthAdjust="spacingAndGlyphs">қайтарды? Қандай қағаз ақшамен</text>
<text x="78" y="749.500" fill="#555" style="font-size:6px" textLength="85" lengthAdjust="spacingAndGlyphs">және монеталармен қайтарды?</text>
</g>
<path d="M190 700l24-3 5 14-24 4z" fill="#d99a6a"/><path d="M195 703l14-2 3 8-14 2z" fill="#e8c8a0"/>
<circle cx="203" cy="720" r="5" fill="#c9b070"/><circle cx="210" cy="722" r="4" fill="#bca25f"/><circle cx="205" cy="726" r="4" fill="#c9b070"/>
<rect x="211" y="733" width="19" height="14" fill="#3c8c58" stroke="#b04030"/>
<path d="M228 740q6-3 12-3" stroke="#eec29a" stroke-width="3" fill="none"/>
<circle cx="246" cy="728" r="9.500" fill="#f3c9a2"/><path d="M237 729q-1-10 9-11 10 0 9 12-1 4-3 6l-1-8q-7 1-10-2-2 2-4 3z" fill="#4a2f1c"/>
<path d="M237 755q0-15 10-17 7 0 8 9l0 8z" fill="#8ec448"/>
<circle cx="89" cy="767" r="3" fill="#777"/><rect x="87" y="769" width="5" height="10" fill="#777"/>
<text class="s" x="91" y="780" fill="#e08a1e" style="font-size:20px">?</text>
<text class="s" x="110" y="786" fill="#8e1414" style="font-size:22px">?</text><rect x="122" y="780" width="4" height="10" fill="#777"/>
<rect x="136" y="768" width="4" height="10" fill="#777"/><text class="s" x="141" y="780" fill="#e08a1e" style="font-size:24px">?</text>
<path d="M176 790l40-12 26 12-36 14-30-7z" fill="#f4f8ea" stroke="#9ab08a"/>
<text class="s" x="181" y="787" fill="#e0352a" style="font-size:19px">1</text>
<text class="s" x="192" y="777" fill="#e0352a" style="font-size:14px">2</text>
<text class="s" x="201" y="791" fill="#1ea05c" style="font-size:17px">3</text>
<text class="s" x="213" y="779" fill="#7f7f7f" style="font-size:11px">×</text>
<text class="s" x="218" y="773" fill="#1e9ae0" style="font-size:15px">+</text>
<text class="s" x="228" y="775" fill="#d9a0d0" style="font-size:11px">÷</text>
<path d="M221 796l18-18" stroke="#3a9a30" stroke-width="3"/>

<!-- thumb 13 -->
<text class="n" x="45.500" y="835">13</text>
<rect x="66" y="821" width="196" height="17" fill="#fff"/>
<rect x="73.500" y="825.500" width="182" height="13" rx="4" fill="#d9e4bf" stroke="#385d8a"/>
<text class="s m" x="165" y="835" fill="#c00000" style="font-size:4.500px">6-тапсырма</text>

<!-- status bar -->
<rect x="42" y="838" width="1558" height="21" fill="url(#sbar)"/>
<rect x="42" y="837.500" width="1558" height="1" fill="#7d9cc6"/>
<rect x="42" y="857.500" width="1558" height="1.500" fill="#eaf3fd"/>
<rect x="1320" y="838.500" width="280" height="19" fill="url(#sbar2)"/>
<path d="M129.500 839v18M215.500 839v18M320.500 839v18" stroke="#9cb9dc"/><path d="M1319.500 839v19" stroke="#eaf3fd"/>
<text class="st" x="50" y="852" textLength="71" lengthAdjust="spacingAndGlyphs">Слайд 9 из 21</text>
<text class="st" x="140" y="852" textLength="67" lengthAdjust="spacingAndGlyphs">"Тема Office"</text>
<text class="st" x="225" y="852" textLength="85" lengthAdjust="spacingAndGlyphs">Русский (Россия)</text>
<rect x="1326" y="839.500" width="56" height="17" rx="3" fill="#dfeaf8" stroke="#89a9d3"/><path d="M1344.500 840v16M1363 840v16" stroke="#b3c9e4"/>
<g fill="none" stroke="#333">
<rect x="1331" y="843.500" width="9" height="9"/><path d="M1334 843.500v9M1334 847h6"/>
<rect x="1349" y="843.500" width="4" height="3"/><rect x="1356" y="843.500" width="4" height="3"/><rect x="1349" y="849.500" width="4" height="3"/><rect x="1356" y="849.500" width="4" height="3"/>
<path d="M1367 844h10M1368 844v5h8v-5M1372 849v3M1369 853h6"/>
</g>
<text x="1390" y="852" fill="#1f3f9e" textLength="21" lengthAdjust="spacingAndGlyphs">85%</text>
<path d="M1434 848h96" stroke="#e8f0fa"/><path d="M1487 844v8" stroke="#e8f0fa"/>
<circle cx="1428" cy="848" r="7" fill="#dfeaf8" stroke="#4f6f9c"/><path d="M1424 848h8" stroke="#333" stroke-width="2"/>
<circle cx="1546" cy="848" r="7" fill="#dfeaf8" stroke="#4f6f9c"/><path d="M1542 848h8M1546 844v8" stroke="#333" stroke-width="2"/>
<path d="M1475 842h8v8l-4 4-4-4z" fill="#dfeaf8" stroke="#6c8ab2"/>
<rect x="1564" y="841" width="14" height="14" rx="2" fill="#e6eef8" stroke="#87a3c8"/><path d="M1567 844h3M1575 844h-2M1567 852h3M1575 852h-2" stroke="#333"/>
<g fill="#5f7da8"><rect x="1596" y="845" width="2" height="2"/><rect x="1592" y="849" width="2" height="2"/><rect x="1596" y="849" width="2" height="2"/><rect x="1588" y="853" width="2" height="2"/><rect x="1592" y="853" width="2" height="2"/><rect x="1596" y="853" width="2" height="2"/></g>

<!-- taskbar -->
<rect x="0" y="859" width="1600" height="41" fill="url(#task)"/>
<g fill="#0b0b0b"><rect x="16" y="873" width="7.500" height="7"/><rect x="24.500" y="872" width="7.500" height="8"/><rect x="16" y="881" width="7.500" height="7"/><rect x="24.500" y="881" width="7.500" height="8"/></g>
<rect x="48" y="860" width="288" height="40" fill="#fff" stroke="#cfcfcf"/>
<circle cx="70" cy="877" r="6" fill="none" stroke="#222" stroke-width="1.300"/><path d="M66 881l-6 7" stroke="#222" stroke-width="1.400"/>
<text x="88" y="886" class="tb" style="font-size:15px" textLength="44" lengthAdjust="spacingAndGlyphs">Поиск</text>
<!-- owl -->
<path d="M272 889q20-3 34-3 14-1 30-12" fill="none" stroke="#8a6440" stroke-width="3"/>
<path d="M282 869l8 8M278 878l12 6M327 866l-3 8M332 870l-6 6" stroke="#7f9d8a" stroke-width="3"/>
<ellipse cx="301" cy="881" rx="10" ry="16" fill="#8c7468"/><circle cx="301" cy="869" r="9" fill="#9c8679"/>
<circle cx="297.500" cy="869" r="3.500" fill="#e7dccb"/><circle cx="304.500" cy="869" r="3.500" fill="#e7dccb"/><circle cx="297.500" cy="869" r="1.500" fill="#222"/><circle cx="304.500" cy="869" r="1.500" fill="#222"/>
<path d="M294 878q7 6 14 0v14h-14z" fill="#b7a493"/>
<!-- task view -->
<g fill="none" stroke="#222"><path d="M353 873h12M353 888h12"/><rect x="353.500" y="876" width="7" height="9"/><path d="M363 876v9"/></g><rect x="364" y="874" width="3" height="3" fill="#222"/><rect x="364" y="884" width="3" height="3" fill="#222"/>
<!-- copilot -->
<path d="M400 878q1-8 7-9h5q3 0 4 4l-3 17h-6q-6 0-7-5z" fill="url(#cop)"/>
<path d="M423 882q-1 8-7 8h-5q-3 0-4-4l3-17h6q6 0 7 5z" fill="url(#cop2)"/>
<!-- edge -->
<circle cx="460" cy="880" r="12" fill="url(#edge)"/><path d="M453 884q1-8 9-8 7 0 9 6-3 2-6 0-3-2-6 0-3 2-1 6 3 3 8 3-12 2-13-7z" fill="#0a5fb0"/><circle cx="465" cy="884" r="4" fill="#fff" opacity=".15"/>
<!-- outlook -->
<rect x="502" y="869" width="20" height="22" rx="2" fill="#1f8fe0"/><path d="M513 872l9 7v12h-10z" fill="#0f5eb0"/><rect x="497" y="873" width="14" height="14" rx="1" fill="#0b67bf"/><text x="504" y="884.500" fill="#fff" class="m" style="font-size:11px;font-weight:bold">O</text>
<!-- explorer -->
<path d="M548 871h9l2 3h9v15h-20z" fill="#f5c23c"/><rect x="548" y="876" width="20" height="13" fill="#ffd96a"/><rect x="555" y="884" width="6" height="7" fill="#2a6cc8"/><rect x="552" y="882" width="12" height="3" fill="#3f86de"/>
<!-- word -->
<rect x="598" y="869" width="19" height="23" fill="#f7f9fc" stroke="#7f96b6"/><path d="M606 873h9M606 877h9M606 881h9M606 885h9" stroke="#7f9cc6"/><rect x="596" y="873" width="11" height="13" fill="#2f5fb0"/><text x="601.500" y="883" class="m" fill="#fff" style="font-size:9px;font-weight:bold">W</text>
<!-- ppt active -->
<rect x="632" y="859" width="47" height="41" fill="#f2f2f2"/>
<rect x="646" y="869" width="19" height="23" fill="#fbeee6" stroke="#e2a282"/><rect x="644" y="874" width="22" height="12" rx="1" fill="#dc4a22"/><circle cx="660" cy="880" r="3.500" fill="#fff"/><text x="650" y="884" fill="#fff" class="m" style="font-size:9px;font-weight:bold">P</text>
<g fill="#0f6cbd"><rect x="440" y="897" width="40" height="3"/><rect x="538" y="897" width="33" height="3"/><rect x="587" y="897" width="33" height="3"/><rect x="633" y="897" width="46" height="3"/></g>
<!-- tray -->
<path d="M1183 869a8 8 0 1 0 9 11 9 9 0 0 1-9-11z" fill="#f5b84a"/>
<path d="M1178 891q-4 0-4-5t5-5q2-5 8-5t8 6q4 1 4 5t-4 4z" fill="url(#cld)"/>
<text x="1207" y="885" class="tb" style="font-size:14px" textLength="29" lengthAdjust="spacingAndGlyphs">15°C</text>
<text x="1244" y="885" class="tb" style="font-size:14px" textLength="86" lengthAdjust="spacingAndGlyphs">Mostly cloudy</text>
<path d="M1355 884l6-6 6 6" fill="none" stroke="#111" stroke-width="1.300"/>
<rect x="1381" y="876" width="9" height="10" rx="2" fill="none" stroke="#222"/><path d="M1390 880l3-2v6l-3-2M1382 873q3-1 6 0M1382 889q3 1 6 0" fill="none" stroke="#222"/>
<path d="M1404 887q1-8 10-10M1407 887q1-5 7-7M1410 887q1-2 4-3" fill="none" stroke="#222"/><circle cx="1414" cy="886" r="1.500" fill="#222"/>
<rect x="1427" y="876" width="14" height="9" fill="#222" stroke="#222"/><rect x="1441" y="878" width="1.500" height="5" fill="#222"/><path d="M1425 875v4h3v-4M1426.500 879v3" stroke="#222" fill="none"/>
<text x="1452" y="885" class="tb" style="font-size:12px" textLength="21" lengthAdjust="spacingAndGlyphs">ҚАЗ</text>
<text x="1513" y="875" class="tb m" style="font-size:12px">22:31</text>
<text x="1513" y="893" class="tb m" style="font-size:12px" textLength="54" lengthAdjust="spacingAndGlyphs">05.10.2025</text>
<path d="M1559 873h15v13h-5l-3 3-2-3h-5z" fill="none" stroke="#111" stroke-width="1.100"/>
<rect x="1596" y="859" width="1" height="41" fill="#b9b9b9"/>

<!-- office orb -->
<circle cx="64" cy="27" r="18.500" fill="url(#orb)" stroke="#a9b3bd"/>
<circle cx="64" cy="27" r="15" fill="#eef0f3" opacity=".5"/>
<rect x="53" y="17" width="10" height="10" fill="#e8541f" stroke="#b83a10"/><rect x="64.500" y="23" width="9" height="9" fill="#4b91d2" stroke="#2c6aa5"/><rect x="58" y="29" width="9" height="9" fill="#f5a623" stroke="#c97f10"/><rect x="66" y="31" width="9" height="7" fill="#7bb23c" stroke="#568524"/><rect x="64" y="17" width="8" height="5" fill="#88b7e2"/>
</svg>
</body>
</html>
